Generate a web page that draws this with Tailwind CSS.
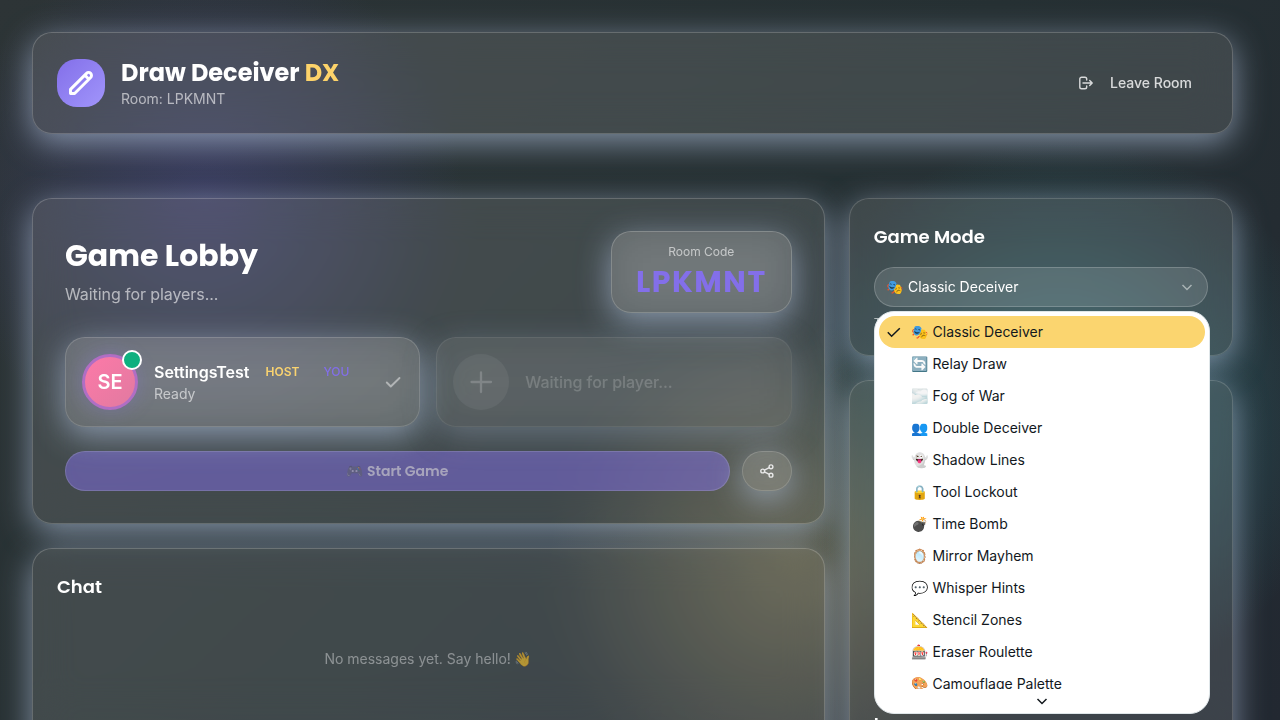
<!DOCTYPE html>
<html lang="en">
<head>
<meta charset="utf-8">
<title>Draw Deceiver DX</title>
<script src="https://cdn.jsdelivr.net/npm/@tailwindcss/browser@4"></script>
</head>
<body class="h-[720px] overflow-hidden bg-[#2d3436] font-['Inter','Noto_Color_Emoji',sans-serif] text-white">
<div class="h-[720px] overflow-hidden pt-8 pl-8 pr-[47px] bg-[radial-gradient(circle_at_16%_28%,rgba(108,92,231,0.24)_0px,transparent_260px),radial-gradient(circle_at_62%_79%,rgba(245,215,120,0.25)_0px,transparent_245px),radial-gradient(circle_at_83%_58%,rgba(60,190,200,0.34)_0px,transparent_280px),linear-gradient(135deg,#2d3436_0%,#263033_50%,#222831_100%)]">
  <header class="flex items-center justify-between rounded-[20px] border border-white/20 bg-white/12 p-6 shadow-[0_8px_32px_rgba(172,190,216,0.68)] backdrop-blur-[20px]">
    <div class="flex items-center gap-4">
      <div class="flex size-12 items-center justify-center rounded-[20px] bg-linear-to-br from-[#836fe9] to-[#a195fb]">
        <svg class="size-7" viewBox="0 0 24 24" fill="none" stroke="#fff" stroke-width="2.500" stroke-linecap="round" stroke-linejoin="round"><path d="M15.232 5.232l3.536 3.536m-2.036-5.036a2.5 2.5 0 113.536 3.536L6.5 21.036H3v-3.572L16.732 3.732z"/></svg>
      </div>
      <div>
        <h1 class="font-['Poppins'] text-2xl font-bold">Draw Deceiver <span class="text-[#fdd36a]">DX</span></h1>
        <p class="text-sm text-white/60">Room: LPKMNT</p>
      </div>
    </div>
    <button class="flex h-10 items-center gap-4 px-4 text-sm font-medium text-white/80">
      <svg class="size-4" viewBox="0 0 16 16" fill="none" stroke="currentColor" stroke-width="1.400" stroke-linecap="round" stroke-linejoin="round"><path d="M8.700 5V4a1.800 1.800 0 0 0-1.800-1.800H3.600A1.800 1.800 0 0 0 1.800 4v8a1.800 1.800 0 0 0 1.800 1.800h3.300A1.800 1.800 0 0 0 8.700 12v-1M5 8h9M11.700 5.500L14.200 8l-2.500 2.500"/></svg>
      Leave Room
    </button>
  </header>
  <main class="mt-16 grid grid-cols-3 items-start gap-6">
    <div class="col-span-2 flex flex-col gap-6">
      <section class="rounded-[20px] border border-white/20 bg-white/12 p-8 shadow-[0_8px_32px_rgba(172,190,216,0.68)] backdrop-blur-[20px]">
        <div class="mb-6 flex items-center justify-between">
          <div>
            <h2 class="mb-2 font-['Poppins'] text-3xl font-bold">Game Lobby</h2>
            <p class="text-base tracking-[-0.08px] text-white/60">Waiting for players...</p>
          </div>
          <div class="h-[82px] rounded-[20px] border border-white/20 bg-white/16 px-6 pt-3 text-center shadow-[0_8px_32px_rgba(172,190,216,0.68)] backdrop-blur-[20px]">
            <p class="text-xs text-white/60">Room Code</p>
            <p class="mt-1 font-['Poppins'] text-3xl font-bold tracking-wider text-[#836fe9]">LPKMNT</p>
          </div>
        </div>
        <div class="mb-6 grid grid-cols-2 gap-4">
          <div class="flex h-[90px] items-center gap-4 rounded-[20px] border border-white/16 bg-white/15 px-4 shadow-[0_8px_32px_rgba(172,190,216,0.68)] backdrop-blur-[20px]">
            <div class="relative flex size-14 items-center justify-center rounded-full border-3 border-[#b06ec4] bg-linear-to-br from-[#fd79a8] to-[#e17aa0] text-xl font-semibold shadow-[0_0_20px_rgba(131,111,233,0.3)]">SE
              <span class="absolute -top-[7px] -right-[7px] size-5 rounded-full border-2 border-white bg-[#0fb07f]"></span>
            </div>
            <div class="flex-1">
              <div class="flex items-center gap-4"><span class="font-semibold">SettingsTest</span><span class="text-xs font-semibold text-[#f9d370]">HOST</span><span class="ml-2 text-xs font-medium text-[#836fe9]">YOU</span></div>
              <p class="text-sm text-white/60">Ready</p>
            </div>
            <svg class="size-5" viewBox="0 0 20 20" fill="none" stroke="#b2b5b6" stroke-width="1.900" stroke-linecap="round" stroke-linejoin="round"><path d="M3.800 10.500l4 4 8.700-8.500"/></svg>
          </div>
          <div class="flex h-[90px] items-center gap-4 rounded-[20px] border border-white/16 bg-white/16 px-4 opacity-50 shadow-[0_8px_32px_rgba(172,190,216,0.68)] backdrop-blur-[20px]">
            <div class="flex size-14 items-center justify-center rounded-full bg-white/12">
              <svg class="size-8" viewBox="0 0 32 32" fill="none" stroke="#b4b6b8" stroke-width="2.300" stroke-linecap="round"><path d="M16 6.500v19.500M6.500 16h19.500"/></svg>
            </div>
            <p class="text-base font-medium tracking-[-0.04px] text-white/40">Waiting for player...</p>
          </div>
        </div>
        <div class="flex gap-3">
          <button class="h-10 flex-1 rounded-[20px] border border-white/13 bg-[#836fe9]/50 font-['Poppins','Noto_Color_Emoji'] text-sm font-semibold"><span class="text-[#ededde] opacity-50">🎮 Start Game</span></button>
          <button class="flex h-10 w-[50px] items-center justify-center rounded-[20px] border border-white/16 bg-white/14 shadow-[0_8px_32px_rgba(172,190,216,0.68)] backdrop-blur-[20px]">
            <svg class="size-4" viewBox="0 0 16 16" fill="none" stroke="#e8e8e8" stroke-width="1.400"><circle cx="3.700" cy="8" r="1.900"/><circle cx="12" cy="3.800" r="1.900"/><circle cx="12" cy="12.200" r="1.900"/><path d="M5.400 7.100l4.900-2.400M5.400 8.900l4.900 2.400"/></svg>
          </button>
        </div>
      </section>
      <section class="h-[300px] rounded-[20px] border border-white/20 bg-white/12 p-6 shadow-[0_8px_32px_rgba(172,190,216,0.68)] backdrop-blur-[20px]">
        <h3 class="font-['Poppins'] text-lg font-semibold">Chat</h3>
        <p class="mt-12 text-center text-sm text-white/40">No messages yet. Say hello! <span class="text-white opacity-60">👋</span></p>
      </section>
    </div>
    <aside class="relative flex flex-col gap-6">
      <section class="rounded-[20px] border border-white/16 bg-white/12 p-6 shadow-[0_8px_32px_rgba(172,190,216,0.68)] backdrop-blur-[20px]">
        <h3 class="mb-4 font-['Poppins'] text-lg font-semibold">Game Mode</h3>
        <div class="flex h-10 items-center justify-between rounded-[20px] border border-white/20 bg-white/12 px-3 text-sm"><span>🎭 Classic Deceiver</span>
          <svg class="size-4" viewBox="0 0 16 16" fill="none" stroke="#a9b3b5" stroke-width="1.500"><path d="M3.500 6l4.500 4.500L12.500 6"/></svg>
        </div>
        <p class="mt-2 text-xs text-white/60">T</p>
      </section>
      <section class="h-[500px] rounded-[20px] border border-white/16 bg-white/12 px-6 pt-[329px] shadow-[0_8px_32px_rgba(172,190,216,0.68)] backdrop-blur-[20px]">
        <h3 class="font-['Poppins'] text-lg font-semibold">L</h3>
      </section>
      <div class="absolute top-[113px] left-[25px] h-[403px] w-[336px] overflow-hidden rounded-[20px] border border-[#dfe6e9] bg-white p-1 text-sm text-[#12181d]">
        <ul class="h-[373px] overflow-hidden">
          <li class="relative flex h-8 items-center rounded-[16px] bg-[#fbd56f] pl-[32.5px]"><svg class="absolute left-[7px] size-4" viewBox="0 0 16 16" fill="none" stroke="#12181d" stroke-width="1.500"><path d="M1.800 8.300l3.800 4 8.200-8.100"/></svg>🎭 Classic Deceiver</li>
          <li class="flex h-8 items-center pl-[32.5px]">🔄 Relay Draw</li>
          <li class="flex h-8 items-center pl-[32.5px]">🌫️ Fog of War</li>
          <li class="flex h-8 items-center pl-[32.5px]">👥 Double Deceiver</li>
          <li class="flex h-8 items-center pl-[32.5px]">👻 Shadow Lines</li>
          <li class="flex h-8 items-center pl-[32.5px]">🔒 Tool Lockout</li>
          <li class="flex h-8 items-center pl-[32.5px]">💣 Time Bomb</li>
          <li class="flex h-8 items-center pl-[32.5px]">🪞 Mirror Mayhem</li>
          <li class="flex h-8 items-center pl-[32.5px]">💬 Whisper Hints</li>
          <li class="flex h-8 items-center pl-[32.5px]">📐 Stencil Zones</li>
          <li class="flex h-8 items-center pl-[32.5px]">🎰 Eraser Roulette</li>
          <li class="flex h-8 items-center pl-[32.5px]">🎨 Camouflage Palette</li>
        </ul>
        <svg class="mx-auto mt-1 size-4" viewBox="0 0 16 16" fill="none" stroke="#12181d" stroke-width="1.500"><path d="M3.500 6l4.500 4.500L12.500 6"/></svg>
      </div>
    </aside>
  </main>
</div>
</body>
</html>
